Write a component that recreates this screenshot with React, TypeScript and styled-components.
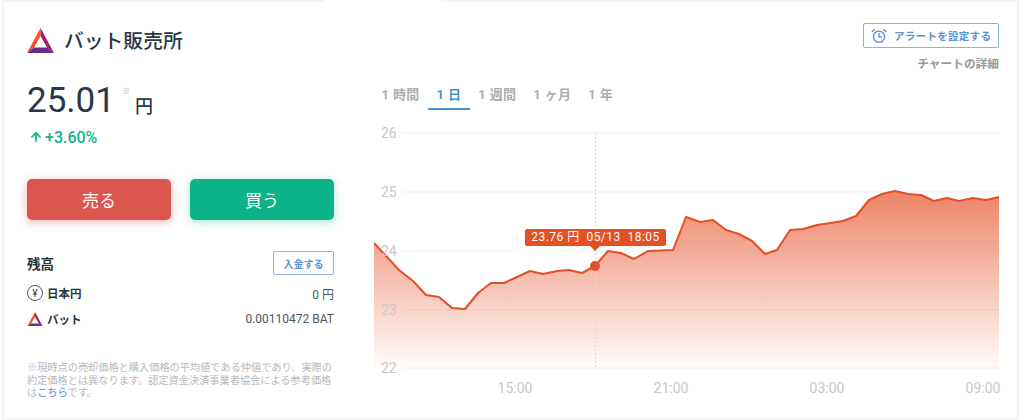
import styled, {createGlobalStyle} from 'styled-components';
import {ArrowUp} from 'lucide-react';

const GlobalStyle = createGlobalStyle`
  html, body {
    margin: 0;
    background: #fff;
  }
  body {
    font-family: Roboto, "Noto Sans CJK JP", sans-serif;
    color: #2b3648;
  }
  * {
    box-sizing: border-box;
  }
`;

const Card = styled.div`
  position: relative;
  display: grid;
  grid-template-columns: 307px 630px;
  column-gap: 40px;
  width: 1017px;
  height: 420px;
  margin-left: 2px;
  padding: 25px 0 0 23px;
  border: 2px solid #f4f6f6;
`;

const TopNotch = styled.div`
  position: absolute;
  top: -2px;
  left: 320px;
  width: 117px;
  height: 2px;
  background: #fff;
`;

const LeftColumn = styled.section`
  display: flex;
  flex-direction: column;
`;

const TitleRow = styled.div`
  display: flex;
  align-items: center;
  gap: 10px;
  height: 27px;
`;

const Title = styled.h1`
  margin: 2px 0 0;
  font-size: 19.8px;
  line-height: 27px;
  font-weight: 500;
  color: #2b3648;
`;

const PriceRow = styled.div`
  display: flex;
  align-items: flex-start;
  height: 44px;
  margin-top: 25px;
`;

const Price = styled.span`
  font-size: 35px;
  line-height: 44px;
  color: #2b3648;
`;

const PriceNote = styled.span`
  margin: 8px 0 0 7px;
  font-size: 8px;
  line-height: 10px;
  color: #a9adb3;
`;

const PriceUnit = styled.span`
  margin: 16px 0 0 5px;
  font-size: 18px;
  line-height: 24px;
  font-weight: 500;
`;

const Change = styled.div`
  display: flex;
  align-items: center;
  gap: 2px;
  margin: 4px 0 0 2px;
  height: 20px;
  font-size: 16px;
  font-weight: 500;
  color: #0eb489;
`;

const TradeRow = styled.div`
  display: grid;
  grid-template-columns: 144px 144px;
  column-gap: 19px;
  margin-top: 32px;
`;

const TradeButton = styled.button<{$tone: string; $glow: string}>`
  height: 41px;
  border: 0;
  border-radius: 5px;
  background: ${props => props.$tone};
  box-shadow: 0 2px 8px ${props => props.$glow};
  color: #fff;
  font-family: inherit;
  font-size: 17px;
`;

const BalanceHead = styled.div`
  display: flex;
  align-items: center;
  justify-content: space-between;
  height: 24px;
  margin-top: 31px;
`;

const BalanceTitle = styled.h2`
  margin: 0;
  font-size: 13.5px;
  font-weight: 700;
  color: #2d3138;
`;

const DepositButton = styled.button`
  width: 61px;
  height: 24px;
  padding: 0;
  border: 1px solid #86b3e0;
  border-radius: 2px;
  background: #fff;
  color: #5b94d3;
  font-family: inherit;
  font-size: 10px;
  font-weight: 700;
`;

const BalanceList = styled.div`
  display: flex;
  flex-direction: column;
  gap: 8px;
  margin-top: 9px;
`;

const BalanceRow = styled.div`
  display: flex;
  align-items: center;
  justify-content: space-between;
  height: 18px;
`;

const Asset = styled.div`
  display: flex;
  align-items: center;
  gap: 4px;
  font-size: 11.5px;
  font-weight: 700;
  color: #2d3138;
`;

const YenMark = styled.span`
  display: flex;
  align-items: center;
  justify-content: center;
  width: 16px;
  height: 16px;
  border: 1px solid #4c5560;
  border-radius: 50%;
  font-size: 10px;
  font-weight: 400;
`;

const Amount = styled.span`
  font-size: 12px;
  color: #50565e;
`;

const Note = styled.p`
  margin: 34px 0 0;
  font-size: 10.2px;
  line-height: 12.5px;
  color: #b7babd;
`;

const NoteLink = styled.a`
  color: #5b94d3;
`;

const RightColumn = styled.section`
  display: flex;
  flex-direction: column;
  margin-top: -4px;
`;

const HeadActions = styled.div`
  display: flex;
  flex-direction: column;
  align-items: flex-end;
  padding-right: 5px;
`;

const AlertButton = styled.button`
  display: flex;
  align-items: center;
  gap: 7px;
  width: 136px;
  height: 25px;
  padding: 0 0 0 7px;
  border: 1px solid #86b3e0;
  border-radius: 2px;
  background: #fff;
  color: #5b94d3;
  font-family: inherit;
  font-size: 10.5px;
  font-weight: 700;
  letter-spacing: .3px;
`;

const DetailsLink = styled.span`
  margin-top: 8px;
  font-size: 11.7px;
  line-height: 16px;
  font-weight: 700;
  color: #9a9a9a;
`;

const Tabs = styled.div`
  display: flex;
  margin: 10px 0 0 -1px;
`;

const Tab = styled.div<{$active?: boolean}>`
  height: 28px;
  padding: 0 8.4px;
  border-bottom: 2px solid ${props => (props.$active ? '#4a8fd4' : 'transparent')};
  color: ${props => (props.$active ? '#4a8fd4' : '#adadad')};
  font-size: 13px;
  line-height: 26px;
  font-weight: 700;
  letter-spacing: .4px;
  white-space: nowrap;
`;

const ChartArea = styled.div`
  position: relative;
  width: 630px;
  height: 275px;
  margin-top: 15px;
`;

const ChartSvg = styled.svg`
  display: block;
`;

const AxisText = styled.text`
  font-family: Roboto, sans-serif;
  font-size: 14px;
  fill: #c8c8c8;
`;

const Tooltip = styled.div`
  position: absolute;
  left: 151px;
  top: 104px;
  width: 141px;
  height: 17px;
  border-radius: 2px;
  background: #e54f25;
  color: #fff;
  font-size: 12px;
  line-height: 17px;
  letter-spacing: .45px;
  text-align: center;
  white-space: pre;
  &::after {
    content: '';
    position: absolute;
    left: 65px;
    top: 17px;
    border: 5px solid transparent;
    border-top-color: #e54f25;
    border-bottom-width: 0;
  }
`;

const BatLogo = ({size}: {size: number}) => (
    <svg width={size} height={size * 25 / 27} viewBox="0 0 27 25">
        <polygon points="13.5,0 13.5,8 7,19.5 0,25" fill="#ff4f1a" />
        <polygon points="13.5,0 27,25 20,19.5 13.5,8" fill="#9e1f63" />
        <polygon points="0,25 7,19.5 20,19.5 27,25" fill="#662d91" />
    </svg>
);

const AlarmIcon = () => (
    <svg width="16" height="16" viewBox="0 0 16 16" fill="none" stroke="#5b94d3" strokeWidth="1.4" strokeLinecap="round">
        <circle cx="8" cy="8.8" r="5.6" />
        <path d="M8 5.8v3.2h2.4" />
        <path d="M1.2 3.4l2-1.8" />
        <path d="M14.8 3.4l-2-1.8" />
    </svg>
);

const linePoints = [
    [374, 243], [387, 257], [399, 270], [413, 281], [426, 295], [439, 297], [452, 308], [465, 309],
    [478, 293], [491, 283], [504, 283], [517, 277], [530, 271], [543, 274], [557, 271], [569, 270],
    [582, 273], [595, 266], [608, 251], [621, 253], [634, 259], [648, 251], [673, 250], [686, 217],
    [700, 222], [713, 220], [726, 230], [739, 234], [752, 241], [765, 254], [777, 250], [790, 230],
    [803, 229], [817, 225], [830, 223], [843, 221], [856, 216], [869, 200], [882, 194], [895, 191],
    [908, 194], [921, 195], [934, 201], [947, 198], [959, 201], [973, 198], [986, 200], [999, 197],
];

const line = linePoints.map(p => p.join(',')).join(' ');
const yTicks = [[26, 133], [25, 192], [24, 251], [23, 310], [22, 368]];
const xTicks = [['15:00', 515], ['21:00', 671], ['03:00', 827], ['09:00', 983]];

const App = () => (
    <>
        <GlobalStyle />
        <Card>
            <TopNotch />
            <LeftColumn>
                <TitleRow>
                    <BatLogo size={27} />
                    <Title>バット販売所</Title>
                </TitleRow>
                <PriceRow>
                    <Price>25.01</Price>
                    <PriceNote>※</PriceNote>
                    <PriceUnit>円</PriceUnit>
                </PriceRow>
                <Change><ArrowUp size={14} strokeWidth={3} />+3.60%</Change>
                <TradeRow>
                    <TradeButton $tone="#dc5650" $glow="rgba(220, 86, 80, .45)">売る</TradeButton>
                    <TradeButton $tone="#0cb388" $glow="rgba(12, 179, 136, .35)">買う</TradeButton>
                </TradeRow>
                <BalanceHead>
                    <BalanceTitle>残高</BalanceTitle>
                    <DepositButton>入金する</DepositButton>
                </BalanceHead>
                <BalanceList>
                    <BalanceRow>
                        <Asset><YenMark>¥</YenMark>日本円</Asset>
                        <Amount>0 円</Amount>
                    </BalanceRow>
                    <BalanceRow>
                        <Asset><BatLogo size={16} />バット</Asset>
                        <Amount>0.00110472 BAT</Amount>
                    </BalanceRow>
                </BalanceList>
                <Note>
                    ※現時点の売却価格と購入価格の平均値である仲値であり、実際の約定価格とは異なります。認定資金決済事業者協会による参考価格は<NoteLink>こちら</NoteLink>です。
                </Note>
            </LeftColumn>
            <RightColumn>
                <HeadActions>
                    <AlertButton><AlarmIcon />アラートを設定する</AlertButton>
                    <DetailsLink>チャートの詳細</DetailsLink>
                </HeadActions>
                <Tabs>
                    <Tab>1 時間</Tab>
                    <Tab $active>1 日</Tab>
                    <Tab>1 週間</Tab>
                    <Tab>1 ヶ月</Tab>
                    <Tab>1 年</Tab>
                </Tabs>
                <ChartArea>
                    <ChartSvg width="630" height="275" viewBox="374 125 630 275">
                        <defs>
                            <linearGradient id="areaFill" x1="0" y1="191" x2="0" y2="368" gradientUnits="userSpaceOnUse">
                                <stop offset="0" stopColor="#e54f25" stopOpacity=".7" />
                                <stop offset="1" stopColor="#e54f25" stopOpacity=".02" />
                            </linearGradient>
                        </defs>
                        {yTicks.map(([value, y]) => (
                            <line key={value} x1="402" x2="1000" y1={y} y2={y} stroke="#f1f1f1" />
                        ))}
                        <polygon points={`374,368 ${line} 999,368`} fill="url(#areaFill)" />
                        <polyline points={line} fill="none" stroke="#e54f25" strokeWidth="2" strokeLinejoin="round" />
                        <line x1="595.5" x2="595.5" y1="133" y2="368" stroke="#d9d9d9" strokeDasharray="2 2" />
                        <circle cx="595" cy="266" r="5" fill="#e54f25" />
                        {yTicks.map(([value, y]) => (
                            <AxisText key={value} x="381" y={y + 5}>{value}</AxisText>
                        ))}
                        {xTicks.map(([label, x]) => (
                            <AxisText key={label} x={x} y="393" textAnchor="middle">{label}</AxisText>
                        ))}
                    </ChartSvg>
                    <Tooltip>23.76 円  05/13  18:05</Tooltip>
                </ChartArea>
            </RightColumn>
        </Card>
    </>
);

export default App;
